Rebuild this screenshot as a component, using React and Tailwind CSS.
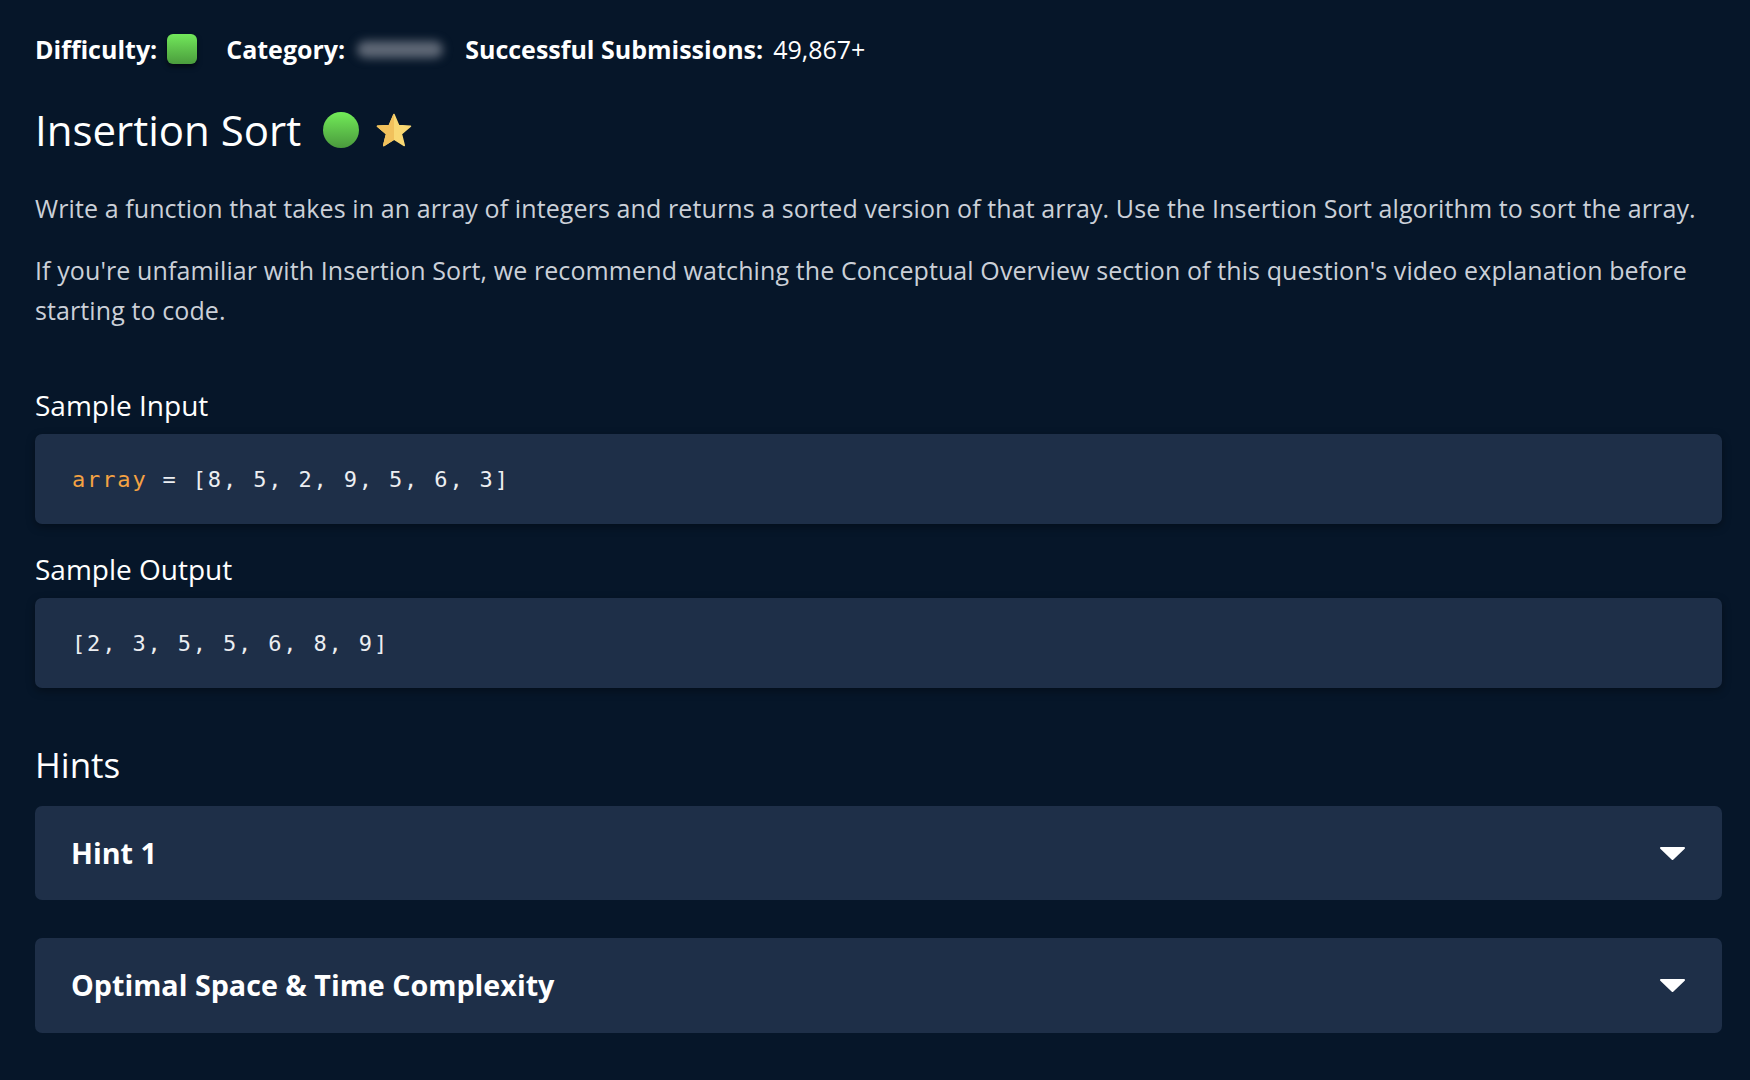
import React from "react"

const Star = () => (
  <svg width="36" height="35" viewBox="0 0 36 35">
    <defs>
      <clipPath id="starLeft">
        <rect x="0" y="0" width="18" height="35" />
      </clipPath>
    </defs>
    <polygon
      points="18,1.5 22.6,12.4 34.5,13.2 25.4,20.9 28.3,32.5 18,26.2 7.7,32.5 10.6,20.9 1.5,13.2 13.4,12.4"
      fill="#f9d873"
      stroke="#f9d873"
      strokeWidth="1.5"
      strokeLinejoin="round"
    />
    <polygon
      clipPath="url(#starLeft)"
      points="18,1.5 22.6,12.4 34.5,13.2 25.4,20.9 28.3,32.5 18,26.2 7.7,32.5 10.6,20.9 1.5,13.2 13.4,12.4"
      fill="#f1c15c"
      stroke="#f1c15c"
      strokeWidth="1.5"
      strokeLinejoin="round"
    />
  </svg>
)

const Caret = () => (
  <svg width="27" height="15" viewBox="0 0 27 15">
    <path d="M2 2 L25 2 L13.5 13 Z" fill="#ffffff" stroke="#ffffff" strokeWidth="2" strokeLinejoin="round" />
  </svg>
)

const CodeBox = ({ children }) => (
  <div className="h-[90px] rounded-[7px] bg-[#1e2f48] shadow-[0_3px_8px_rgba(0,0,0,0.35)] flex items-center pl-[37px] font-['DejaVu_Sans_Mono',monospace] text-[22px] tracking-[1.85px] text-[#eceef1]">
    {children}
  </div>
)

const Hint = ({ title, h }) => (
  <div className={`${h} rounded-[7px] bg-[#1e2f48] flex items-center justify-between pl-[36px] pr-[36px]`}>
    <span className="text-[28.7px] font-bold text-white leading-none">{title}</span>
    <Caret />
  </div>
)

export default function App() {
  return (
    <div className="min-h-screen w-full bg-[#061629] pl-[35px] pr-[28px] pt-[34px] pb-[48px] font-['Open_Sans',sans-serif] text-white">
      {/* meta row */}
      <div className="flex items-center h-[30px] text-[25px] leading-[30px]">
        <span className="font-bold">Difficulty:</span>
        <span className="ml-[10px] w-[30px] h-[30px] rounded-[6px] bg-gradient-to-b from-[#72e85b] to-[#4b9d3d] shadow-[0_3px_5px_rgba(0,0,0,0.55)]"></span>
        <span className="ml-[29px] font-bold">Category:</span>
        <span className="ml-[12px] w-[86px] h-[17px] rounded-full bg-[#5f6876] blur-[5px]"></span>
        <span className="ml-[22px] font-bold">Successful Submissions:</span>
        <span className="ml-[10px]">49,867+</span>
      </div>

      {/* title */}
      <div className="mt-[41px] flex items-center h-[50px]">
        <h1 className="text-[42px] leading-[50px] font-normal">Insertion Sort</h1>
        <span className="ml-[22px] w-[36px] h-[36px] rounded-full bg-gradient-to-b from-[#72ec58] to-[#4a9a3d]"></span>
        <span className="ml-[17px] flex items-center"><Star /></span>
      </div>

      {/* description */}
      <div className="text-[25px] leading-[40px] tracking-[0.1px] text-[#cbd0d8]">
        <p className="mt-[33px]">
          Write a function that takes in an array of integers and returns a sorted version of that array. Use the Insertion Sort algorithm to sort the array.
        </p>
        <p className="mt-[22px]">
          If you're unfamiliar with Insertion Sort, we recommend watching the Conceptual Overview section of this question's video explanation before starting to code.
        </p>
      </div>

      <h2 className="mt-[57px] mb-[11px] text-[28px] leading-[36px] font-normal">Sample Input</h2>
      <CodeBox>
        <span className="text-[#f4a243]">array</span>
        <span>&nbsp;=&nbsp;[8,&nbsp;5,&nbsp;2,&nbsp;9,&nbsp;5,&nbsp;6,&nbsp;3]</span>
      </CodeBox>

      <h2 className="mt-[27px] mb-[11px] text-[28px] leading-[36px] font-normal">Sample Output</h2>
      <CodeBox>
        <span>[2,&nbsp;3,&nbsp;5,&nbsp;5,&nbsp;6,&nbsp;8,&nbsp;9]</span>
      </CodeBox>

      <h2 className="mt-[55px] mb-[19px] text-[35px] leading-[44px] font-normal">Hints</h2>
      <Hint title="Hint 1" h="h-[94px]" />
      <div className="mt-[38px]">
        <Hint title="Optimal Space & Time Complexity" h="h-[95px]" />
      </div>
    </div>
  )
}
